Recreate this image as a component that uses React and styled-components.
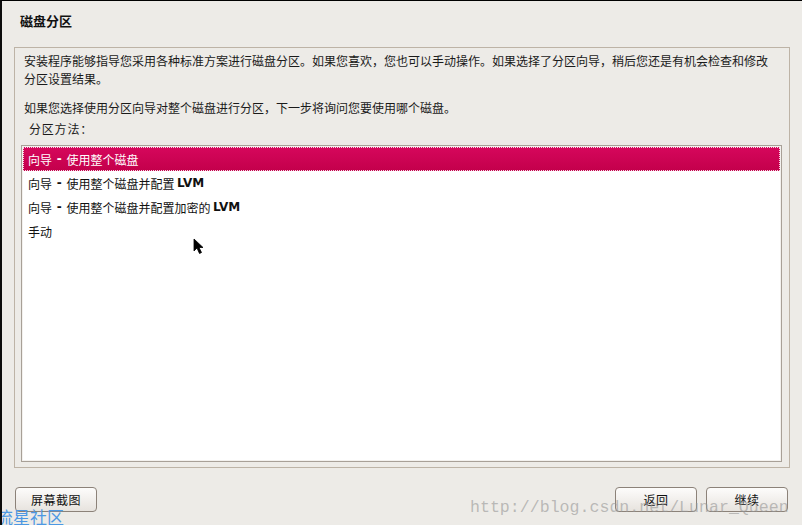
import React from "react";
import styled, { createGlobalStyle } from "styled-components";

const Global = createGlobalStyle`
  html, body { margin: 0; padding: 0; background: #edebe7; }
  body { font-family: "Noto Sans CJK SC", "Noto Sans", sans-serif; }
`;

const Page = styled.div`
  position: relative;
  box-sizing: border-box;
  width: 802px;
  height: 525px;
  overflow: hidden;
  background: #edebe7;
  border-top: 1px solid #000;
  border-left: 2px solid #0c0c0c;
  display: flex;
  flex-direction: column;
  color: #1a1a1a;
`;

const Title = styled.h1`
  margin: 0;
  padding: 12px 0 0 18px;
  height: 34px;
  box-sizing: border-box;
  font-size: 13px;
  line-height: 16px;
  font-weight: 700;
  color: #111;
`;

const Frame = styled.div`
  flex: 0 0 421px;
  box-sizing: border-box;
  margin: 12px 12px 0 12px;
  border: 1px solid #bdb3a6;
  padding: 4px 7px 5px 6px;
  display: flex;
  flex-direction: column;
`;

const Para = styled.p`
  margin: 0 0 11px 3px;
  font-size: 12px;
  line-height: 18px;
  letter-spacing: 0;
  white-space: nowrap;
  color: #1a1a1a;
`;

const Label = styled.div`
  margin: -8px 0 7px 8px;
  font-size: 12px;
  line-height: 18px;
  letter-spacing: 0.8px;
  color: #1a1a1a;
`;

const List = styled.ul`
  flex: 1;
  margin: 0;
  padding: 1px;
  list-style: none;
  background: #fff;
  border: 1px solid #a8a097;
  box-shadow: inset 0 0 0 1px #f3f1ee;
`;

const Row = styled.li`
  height: 24px;
  box-sizing: border-box;
  padding-left: 5px;
  display: flex;
  align-items: center;
  font-size: 12px;
  letter-spacing: 0;
  white-space: pre;
  color: ${(p) => (p.$selected ? "#fff" : "#111")};
  background: ${(p) =>
    p.$selected ? "linear-gradient(#d6075c, #c3004b)" : "transparent"};
  outline: ${(p) => (p.$selected ? "1px dotted rgba(255,255,255,0.85)" : "none")};
  outline-offset: -1px;
`;

const Bold = styled.b`
  font-family: "DejaVu Sans", "Noto Sans", sans-serif;
  font-weight: 700;
  font-size: 12px;
  letter-spacing: 0;
  margin: ${(p) => (p.$dash ? "0 2px" : "0")};
`;

const Footer = styled.div`
  display: flex;
  align-items: flex-start;
  gap: 9px;
  padding: 19px 14px 0 13px;
`;

const Spacer = styled.div`
  flex: 1;
`;

const Button = styled.button`
  width: 82px;
  height: 25px;
  box-sizing: border-box;
  border: 1px solid #8c8279;
  border-radius: 4px;
  background: linear-gradient(#fdfcfb, #e7e3de);
  font-family: "Noto Sans CJK SC", sans-serif;
  font-size: 12px;
  color: #111;
  padding: 0;
  letter-spacing: 0.5px;
`;

const Watermark = styled.div`
  position: absolute;
  left: 468px;
  top: 497px;
  font-family: "Liberation Mono", monospace;
  font-size: 16.6px;
  line-height: 20px;
  color: rgba(150, 150, 150, 0.6);
  pointer-events: none;
  white-space: nowrap;
`;

const Brand = styled.div`
  position: absolute;
  left: -6px;
  top: 506px;
  font-family: "Noto Sans CJK SC", sans-serif;
  font-size: 17px;
  line-height: 20px;
  color: #4d98e3;
  white-space: nowrap;
`;

const Cursor = styled.svg`
  position: absolute;
  left: 191px;
  top: 237px;
`;

export default function App() {
  return (
    <>
      <Global />
      <Page>
        <Title>磁盘分区</Title>
        <Frame>
          <Para>
            安装程序能够指导您采用各种标准方案进行磁盘分区。如果您喜欢，您也可以手动操作。如果选择了分区向导，稍后您还是有机会检查和修改
            <br />
            分区设置结果。
          </Para>
          <Para>如果您选择使用分区向导对整个磁盘进行分区，下一步将询问您要使用哪个磁盘。</Para>
          <Label>分区方法：</Label>
          <List>
            <Row $selected>
              向导 <Bold $dash>-</Bold> 使用整个磁盘
            </Row>
            <Row>
              向导 <Bold $dash>-</Bold> 使用整个磁盘并配置 <Bold>LVM</Bold>
            </Row>
            <Row>
              向导 <Bold $dash>-</Bold> 使用整个磁盘并配置加密的 <Bold>LVM</Bold>
            </Row>
            <Row>手动</Row>
          </List>
        </Frame>
        <Footer>
          <Button>屏幕截图</Button>
          <Spacer />
          <Button>返回</Button>
          <Button>继续</Button>
        </Footer>
        <Watermark>http://blog.csdn.net/Lunar_Queen</Watermark>
        <Brand>流星社区</Brand>
        <Cursor width="12" height="18" viewBox="0 0 12 18">
          <path d="M1 1 L1 13 L4 10 L6.5 15.5 L8.5 14.5 L6 9.5 L10 9.5 Z" fill="#000" stroke="#000" strokeWidth="0.8" />
        </Cursor>
      </Page>
    </>
  );
}
